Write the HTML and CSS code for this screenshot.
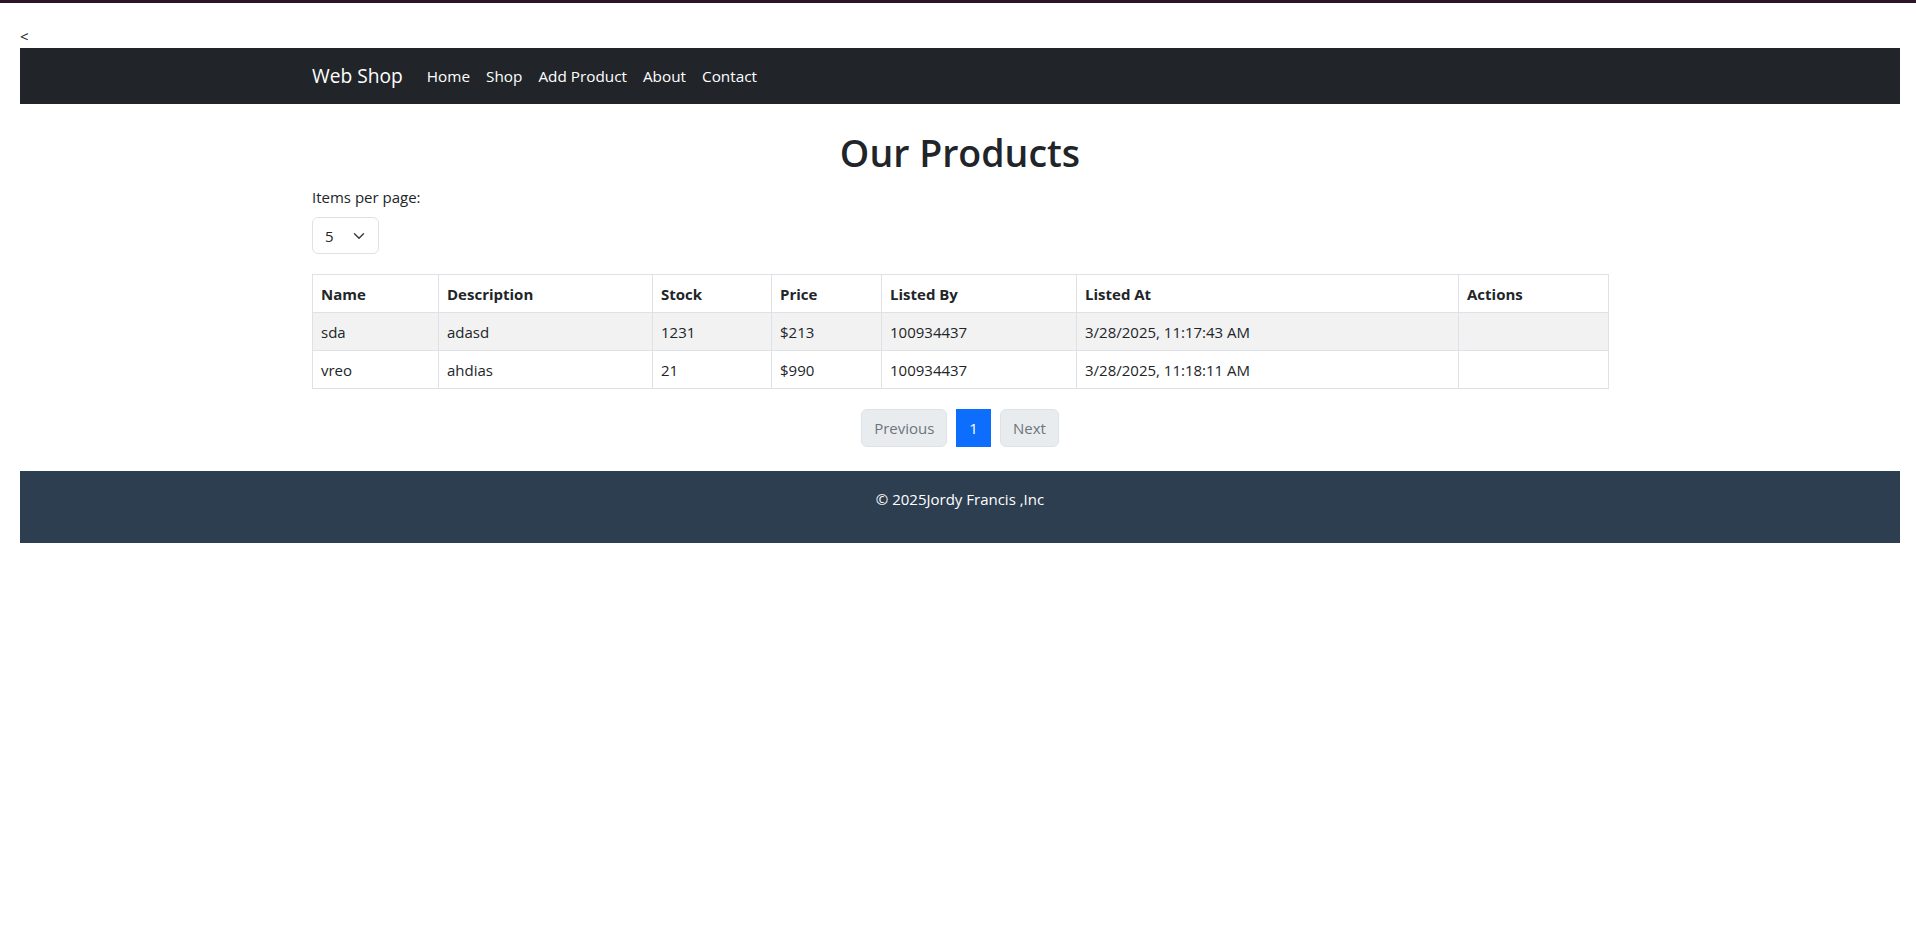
FILE: index.html
```html
<!DOCTYPE html>
<html lang="en">
<head>
<meta charset="utf-8">
<title>Web Shop</title>
<link rel="stylesheet" href="styles.css">
</head>
<body>
<div class="topline"></div>
<div class="app">
  <div class="back">&lt;</div>
  <nav class="navbar">
    <div class="container nav-inner">
      <a class="brand" href="#">Web Shop</a>
      <ul class="nav">
        <li><a class="nav-link" href="#">Home</a></li>
        <li><a class="nav-link" href="#">Shop</a></li>
        <li><a class="nav-link" href="#">Add Product</a></li>
        <li><a class="nav-link" href="#">About</a></li>
        <li><a class="nav-link" href="#">Contact</a></li>
      </ul>
    </div>
  </nav>
  <main class="container main">
    <h1 class="title">Our Products</h1>
    <label class="label">Items per page:</label>
    <div class="select">
      <span class="select-value">5</span>
      <svg class="chevron" width="12" height="8" viewBox="0 0 12 8"><path d="M1.5 1.8 L6 6.2 L10.5 1.8" fill="none" stroke="#343a40" stroke-width="1.4" stroke-linecap="round" stroke-linejoin="round"/></svg>
    </div>
    <table class="table">
      <thead>
        <tr>
          <th class="c-name">Name</th>
          <th class="c-desc">Description</th>
          <th class="c-stock">Stock</th>
          <th class="c-price">Price</th>
          <th class="c-by">Listed By</th>
          <th class="c-at">Listed At</th>
          <th class="c-act">Actions</th>
        </tr>
      </thead>
      <tbody>
        <tr class="odd">
          <td>sda</td><td>adasd</td><td>1231</td><td>$213</td><td>100934437</td><td>3/28/2025, 11:17:43 AM</td><td></td>
        </tr>
        <tr>
          <td>vreo</td><td>ahdias</td><td>21</td><td>$990</td><td>100934437</td><td>3/28/2025, 11:18:11 AM</td><td></td>
        </tr>
      </tbody>
    </table>
    <nav class="pagination">
      <span class="page-btn disabled">Previous</span>
      <span class="page-btn active">1</span>
      <span class="page-btn disabled">Next</span>
    </nav>
  </main>
  <footer class="footer">
    <p class="footer-text">© 2025Jordy Francis ,Inc</p>
  </footer>
</div>
</body>
</html>
```
FILE: styles.css
```css
* { box-sizing: border-box; }
html, body { margin: 0; padding: 0; background: #fff; }
body {
  font-family: "Open Sans", "Noto Sans", sans-serif;
  font-size: 15px;
  line-height: 24px;
  color: #212529;
}
.topline { height: 3px; background: #2a1628; }
.app { margin: 21px 16px 0 20px; }
.back { height: 24px; line-height: 24px; font-size: 15px; color: #212529; }
.container { width: 1296px; margin: 0 auto; }
.navbar { background: #212529; height: 56px; display: flex; align-items: center; }
.nav-inner { display: flex; align-items: center; }
.brand {
  color: #fff; text-decoration: none; font-size: 19.2px; line-height: 30px;
  padding: 5px 0; margin-right: 16px;
}
.nav { display: flex; list-style: none; margin: 0; padding: 0; }
.nav-link { display: block; color: #fff; text-decoration: none; padding: 8px 8px; line-height: 24px; font-size: 15.3px; }
.main { padding-top: 25px; }
.title {
  margin: 0 0 8px; text-align: center; font-size: 37.5px; line-height: 48px; font-weight: 600; color: #212529;
}
.label { display: block; line-height: 24px; }
.select {
  margin-top: 8px; width: 67px; height: 37px; border: 1px solid #dee2e6; border-radius: 6px;
  display: flex; align-items: center; padding: 0 0 0 12px; background: #fff;
}
.select-value { width: 28px; }
.chevron { display: block; }
.table { margin-top: 20px; width: 1296px; border-collapse: collapse; table-layout: fixed; }
.table th, .table td {
  border: 1px solid #dee2e6; padding: 7px 8px 6px; line-height: 24px; text-align: left; vertical-align: top;
}
.table th { font-weight: 700; }
.table tr.odd td { background: #f2f2f2; }
.c-name { width: 126px; }
.c-desc { width: 214px; }
.c-stock { width: 119px; }
.c-price { width: 110px; }
.c-by { width: 195px; }
.c-at { width: 382px; }
.c-act { width: 150px; }
.pagination { display: flex; justify-content: center; gap: 9px; margin-top: 20px; }
.page-btn { display: block; padding: 6px 12px; line-height: 24px; border: 1px solid #dee2e6; }
.page-btn.disabled { background: #e9ecef; color: #6c757d; border-radius: 6px; }
.page-btn.active { background: #0d6efd; border-color: #0d6efd; color: #fff; }
.footer { margin-top: 24px; background: #2c3e50; color: #fff; text-align: center; padding: 16px; }
.footer-text { margin: 0 0 16px; line-height: 24px; }
```
